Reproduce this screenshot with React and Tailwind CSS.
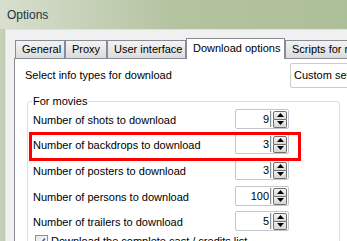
import React from "react";

function Spin({ value }) {
  return (
    <div className="w-[54px] h-[20px] border border-[#c2c7cf] rounded-[2px] bg-white flex items-center shrink-0">
      <div className="flex-1 text-right pr-[1px] leading-none text-black">{value}</div>
      <div className="w-px h-[16px] bg-[#8d8d8d]" />
      <div className="w-px h-[16px] bg-[#e8e8e8] mr-[1px]" />
      <div className="flex flex-col w-[14px] h-[17px] mr-[1px]">
        <div className="flex-1 border border-[#707070] rounded-t-[2px] bg-gradient-to-b from-[#f6f6f6] to-[#d9d9d9] flex items-center justify-center">
          <svg width="7" height="4" viewBox="0 0 7 4"><polygon points="3.5,0 7,4 0,4" fill="#000" /></svg>
        </div>
        <div className="flex-1 border border-t-0 border-[#707070] rounded-b-[2px] bg-gradient-to-b from-[#f0f0f0] to-[#d5d5d5] flex items-center justify-center">
          <svg width="7" height="4" viewBox="0 0 7 4"><polygon points="0,0 7,0 3.5,4" fill="#000" /></svg>
        </div>
      </div>
    </div>
  );
}

function Row({ label, value, className }) {
  return (
    <div className={"flex items-center h-[20px] " + (className || "")}>
      <div className="w-[207px] pl-[5px] pt-[3px] text-black shrink-0 whitespace-nowrap">{label}</div>
      <Spin value={value} />
    </div>
  );
}

function Tab({ children, w }) {
  return (
    <div
      className={
        "h-[18px] border border-b-0 border-[#898c95] bg-gradient-to-b from-[#f3f3f3] to-[#dcdcdc] pl-[6px] flex items-center whitespace-nowrap overflow-hidden shrink-0 " +
        w
      }
    >
      {children}
    </div>
  );
}

export default function App() {
  return (
    <div className="w-[347px] h-[241px] overflow-hidden relative bg-[#b3c39f] text-[11px] font-['Liberation_Sans',Arial,sans-serif] text-black">
      <div className="h-[29px] pl-[7px] flex items-center text-[12px] text-[#1e3246] bg-gradient-to-r from-[#d8dfcf] via-[#b4c3a0] to-[#adbf98]">
        Options
      </div>
      <div className="flex h-[212px]">
        <div className="w-[5px] shrink-0 bg-gradient-to-r from-[#c6d1b7] to-[#c2ccb2]" />
        <div className="flex-1 min-w-0 bg-[#f0f0f0] border-t border-l border-[#dfe3dc] pt-[8px] pl-[8px] flex flex-col">
          <div className="flex items-end h-[20px] pl-[1px]">
            <Tab w="w-[50px]">General</Tab>
            <Tab w="w-[42px]">Proxy</Tab>
            <Tab w="w-[79px]">User interface</Tab>
            <div className="w-[99px] h-[21px] -mb-px relative z-10 bg-white border border-b-0 border-[#898c95] pl-[6px] flex items-center whitespace-nowrap shrink-0 pb-[2px]">
              Download options
            </div>
            <Tab w="w-[80px]">Scripts for movies</Tab>
          </div>
          <div className="flex-1 bg-white border-t border-l border-[#898c95] flex flex-col">
            <div className="flex items-center mt-[4px]">
              <div className="w-[275px] pl-[10px] shrink-0">Select info types for download</div>
              <div className="w-[100px] h-[25px] border border-[#c9ccd1] rounded-[2px] pl-[3px] flex items-center whitespace-nowrap shrink-0">
                Custom settings
              </div>
            </div>
            <div className="relative ml-[12px] mt-[13px] w-[313px] h-[160px] border border-[#d5dfe5] rounded-[3px] pt-[7px] shrink-0">
              <span className="absolute -top-[7px] left-[4px] px-[1px] bg-white leading-[13px]">For movies</span>
              <Row label="Number of shots to download" value="9" />
              <Row label="Number of backdrops to download" value="3" className="mt-[5px]" />
              <Row label="Number of posters to download" value="3" className="mt-[6px]" />
              <Row label="Number of persons to download" value="100" className="mt-[6px]" />
              <Row label="Number of trailers to download" value="5" className="mt-[5px]" />
              <div className="flex items-center mt-[2px] pl-[7px]">
                <div className="w-[13px] h-[13px] border border-[#8e8f8f] bg-gradient-to-br from-[#e6e6e6] to-[#ffffff] flex items-center justify-center">
                  <svg width="9" height="9" viewBox="0 0 9 9"><path d="M1 4.5 L3.5 7 L8 1.5" stroke="#4a5f97" strokeWidth="1.6" fill="none" /></svg>
                </div>
                <span className="ml-[3px] whitespace-nowrap">Download the complete cast / credits list</span>
              </div>
            </div>
          </div>
        </div>
      </div>
      <div className="absolute left-[29px] top-[132px] w-[272px] h-[29px] border-[3px] border-[#ff0000]" />
    </div>
  );
}
